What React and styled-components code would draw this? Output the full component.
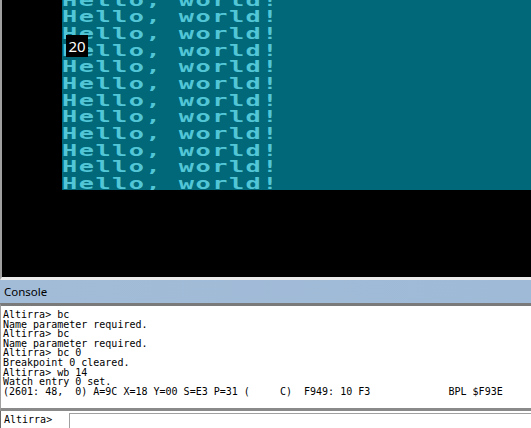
import React from "react";
import styled, { createGlobalStyle } from "styled-components";

const GlobalStyle = createGlobalStyle`
  html, body {
    margin: 0;
    padding: 0;
    background: #ffffff;
  }
  body {
    font-family: "Noto Sans", sans-serif;
  }
`;

const color = {
  frame: "#a0a0a0",
  frameDark: "#696969",
  teal: "#006878",
  tealText: "#52c6d6",
  header: "#a2bcd8",
  ink: "#000000"
};

const screenRows = Array.from({ length: 12 }, () => "Hello, world!");

const consoleLines = [
  "Altirra> bc",
  "Name parameter required.",
  "Altirra> bc",
  "Name parameter required.",
  "Altirra> bc 0",
  "Breakpoint 0 cleared.",
  "Altirra> wb 14",
  "Watch entry 0 set.",
  "(2601: 48,  0) A=9C X=18 Y=00 S=E3 P=31 (     C)  F949: 10 F3             BPL $F93E"
];

const App = () => (
  <Page>
    <GlobalStyle />
    <Display>
      <Screen>
        <ScreenText>
          {screenRows.map((row, i) => (
            <ScreenRow key={i}>{row}</ScreenRow>
          ))}
        </ScreenText>
        <Badge>20</Badge>
      </Screen>
    </Display>
    <PaneHeader>Console</PaneHeader>
    <ConsoleBody>
      {consoleLines.map((line, i) => (
        <ConsoleLine key={i}>{line}</ConsoleLine>
      ))}
    </ConsoleBody>
    <PromptRow>
      <PromptLabel>Altirra&gt;</PromptLabel>
      <PromptInput />
    </PromptRow>
  </Page>
);

export default App;

const Page = styled.div`
  width: 531px;
  height: 428px;
  overflow: hidden;
  display: flex;
  flex-direction: column;
`;

const Display = styled.div`
  height: 277px;
  flex: none;
  background: #000;
  border-left: 2px solid ${color.frame};
  padding-left: 60px;
  border-bottom: 3px solid #ececec;
`;

const Screen = styled.div`
  position: relative;
  height: 190px;
  background: ${color.teal};
  overflow: hidden;
`;

// emulator output is scrolled: the first row is half off the top
const ScreenText = styled.div`
  margin-top: -7.4px;
  transform: scaleX(1.58);
  transform-origin: left top;
`;

const ScreenRow = styled.div`
  height: 16.667px;
  line-height: 16.667px;
  font-family: "DejaVu Sans Mono", monospace;
  font-weight: bold;
  font-size: 16px;
  letter-spacing: 0.93px;
  color: ${color.tealText};
  white-space: pre;
`;

const Badge = styled.div`
  position: absolute;
  left: 4px;
  top: 35px;
  width: 22px;
  height: 22px;
  background: #000;
  color: #fff;
  font-family: "Noto Sans", sans-serif;
  font-size: 15px;
  line-height: 22px;
  text-align: center;
`;

const PaneHeader = styled.div`
  height: 23px;
  flex: none;
  display: flex;
  align-items: center;
  padding-left: 4px;
  background: linear-gradient(to right, ${color.header}, #9fbad6);
  color: ${color.ink};
  font-family: "Noto Sans", sans-serif;
  font-size: 11.5px;
`;

const ConsoleBody = styled.div`
  height: 108px;
  flex: none;
  box-sizing: border-box;
  padding: 4px 0 0 2px;
  border-top: 3px solid #7a7a7a;
  border-bottom: 3px solid #8a8a8a;
  border-left: 1px solid ${color.frame};
  background: #fff;
  overflow: hidden;
`;

const ConsoleLine = styled.div`
  font-family: "DejaVu Sans Mono", monospace;
  font-size: 10px;
  line-height: 9.6px;
  height: 9.6px;
  color: ${color.ink};
  white-space: pre;
`;

const PromptRow = styled.div`
  flex: 1;
  display: flex;
  border-left: 1px solid ${color.frameDark};
  background: #fff;
`;

const PromptLabel = styled.div`
  width: 68px;
  flex: none;
  padding: 3px 0 0 3px;
  box-sizing: border-box;
  font-family: "DejaVu Sans Mono", monospace;
  font-size: 10px;
  color: ${color.ink};
`;

const PromptInput = styled.div`
  flex: 1;
  margin-top: 2px;
  border-top: 1px solid ${color.frame};
  border-left: 1px solid ${color.frame};
  background: #fff;
`;
